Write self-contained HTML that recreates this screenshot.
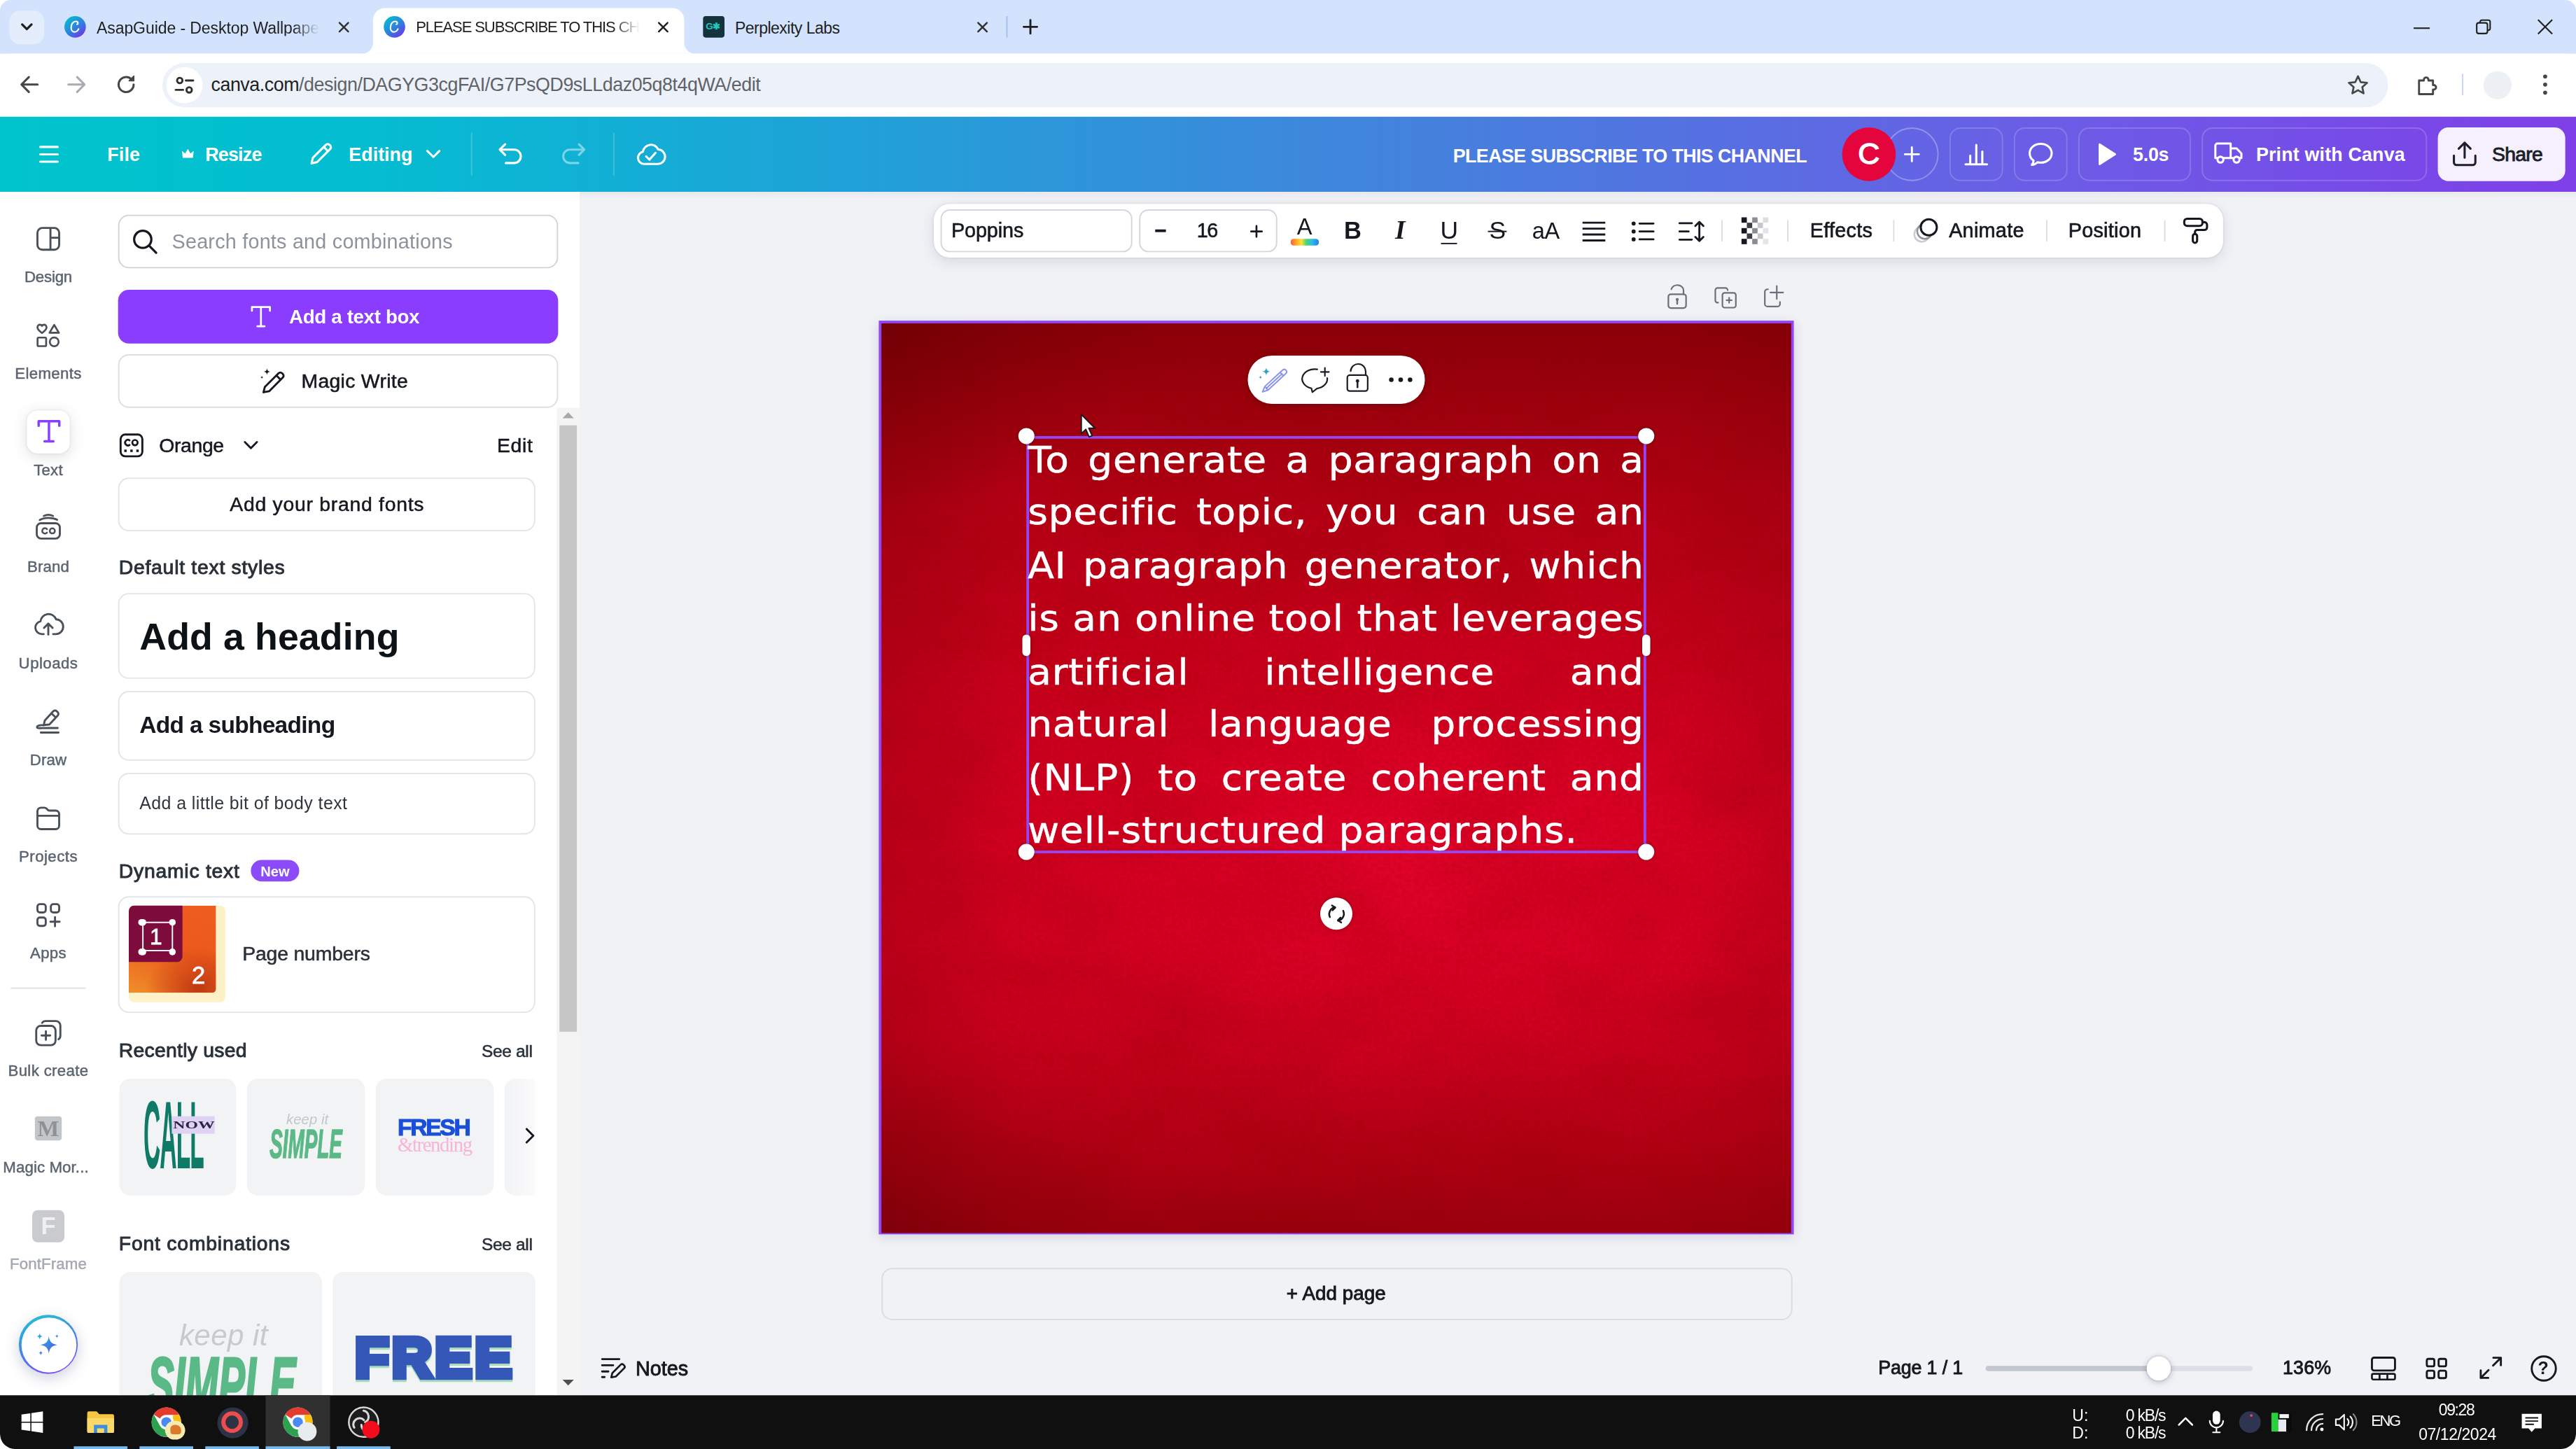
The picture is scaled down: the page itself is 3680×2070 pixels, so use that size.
<!DOCTYPE html>
<html lang="en">
<head>
<meta charset="utf-8">
<title>PLEASE SUBSCRIBE TO THIS CHANNEL - Canva</title>
<style>
*{box-sizing:border-box;margin:0;padding:0}
html,body{width:3680px;height:2070px;overflow:hidden;background:#fff}
body{font-family:"Liberation Sans",sans-serif;color:#0d1216}
#stage{position:absolute;left:0;top:0;width:1920px;height:1080px;transform:scale(1.9166667);transform-origin:0 0;overflow:hidden;background:#fff;border-radius:8px 8px 11px 11px}
.abs{position:absolute}
.t{position:absolute;white-space:nowrap;line-height:1}
svg{position:absolute;overflow:visible}
/* ---------- browser chrome ---------- */
#tabstrip{left:0;top:0;width:1920px;height:40px;background:#d3e3fd}
#toolbar{left:0;top:40px;width:1920px;height:47px;background:#fff;border-radius:8px 8px 0 0}
#omni{left:121px;top:47px;width:1659px;height:33px;border-radius:17px;background:#edf2fa}
.tabt{font-size:12px;color:#1f1f1f;top:14.7px}
/* ---------- canva header ---------- */
#hdr{left:0;top:87px;width:1920px;height:56px;background:linear-gradient(90deg,#00c4cc 0%,#04bdd1 14%,#1ba6d7 30%,#3f86dc 52%,#6c5ce6 80%,#7f3fe8 100%)}
.hb{font-weight:700;font-size:14px;color:#fff;top:108px}
.hbtn{position:absolute;top:95px;height:40px;border:1px solid rgba(255,255,255,.18);border-radius:8px}
/* ---------- sidebar ---------- */
#side{left:0;top:143px;width:72px;height:897px;background:#fff}
.sl{-webkit-text-stroke:.25px currentColor;position:absolute;left:0;width:72px;text-align:center;font-size:11.6px;color:#5b6470;line-height:1;white-space:nowrap}
/* ---------- panel ---------- */
#panel{left:72px;top:143px;width:360px;height:897px;background:#fff}
.card{position:absolute;border:1px solid #e2e5e9;border-radius:8px;background:#fff}
.pt{position:absolute;white-space:nowrap;line-height:1;color:#0d1216}
/* ---------- editor ---------- */
#editor{left:432px;top:143px;width:1488px;height:897px;background:#f1f2f6}
#txt .ln{white-space:nowrap;text-align:justify;text-align-last:justify;height:39.5px}
.hd{position:absolute;width:12.6px;height:12.6px;border-radius:50%;background:#fff;box-shadow:0 0 3px rgba(0,0,0,.35)}
.hs{position:absolute;width:5.6px;height:16px;border-radius:3px;background:#fff;box-shadow:0 0 3px rgba(0,0,0,.35)}
/* ---------- taskbar ---------- */
#task{left:0;top:1040px;width:1920px;height:40px;background:#101010;border-radius:0 0 11px 11px}
.tk{position:absolute;white-space:nowrap;line-height:1;color:#fff;font-size:12px}
</style>
</head>
<body>
<div id="stage">

<!-- ================= BROWSER CHROME ================= -->
<div id="tabstrip" class="abs"></div>
<div id="toolbar" class="abs"></div>
<!-- tab search -->
<div class="abs" style="left:7px;top:8px;width:26px;height:25px;border-radius:8px;background:#e4edfc"></div>
<svg style="left:14px;top:15px" width="12" height="10" viewBox="0 0 12 10"><path d="M2.5 3.2 L6 6.7 L9.5 3.2" fill="none" stroke="#1f1f1f" stroke-width="1.7" stroke-linecap="round" stroke-linejoin="round"/></svg>
<!-- tab 1 -->
<svg style="left:48px;top:12px" width="16" height="16" viewBox="0 0 16 16"><defs><linearGradient id="cvg" x1="0.1" y1="0" x2="0.9" y2="1"><stop offset="0" stop-color="#00c4cc"/><stop offset=".55" stop-color="#2f7fe0"/><stop offset="1" stop-color="#7d2ae8"/></linearGradient></defs><circle cx="8" cy="8" r="8" fill="url(#cvg)"/><path d="M10.6 9.6c-.6 1.3-1.7 2.2-3 2.2-1.6 0-2.6-1.4-2.6-3.3 0-2.6 1.6-4.6 3.5-4.6 1 0 1.6.6 1.6 1.3 0 .5-.3.9-.7.9" fill="none" stroke="#fff" stroke-width="1.1" stroke-linecap="round"/></svg>
<div class="t tabt" id="t_tab1" style="left:72px;width:166px;overflow:hidden;-webkit-mask-image:linear-gradient(90deg,#000 88%,transparent);letter-spacing:-0.04px">AsapGuide - Desktop Wallpaper</div>
<svg style="left:251.7px;top:15.8px" width="8.6" height="8.6" viewBox="0 0 10 10"><path d="M1.2 1.2 L8.8 8.8 M8.8 1.2 L1.2 8.8" stroke="#303030" stroke-width="1.5" stroke-linecap="round"/></svg>
<!-- active tab -->
<div class="abs" style="left:278px;top:6px;width:232px;height:34px;background:#fff;border-radius:9px 9px 0 0"></div>
<svg style="left:270px;top:32px" width="8" height="8" viewBox="0 0 8 8"><path d="M8 0 V8 H0 A8 8 0 0 0 8 0Z" fill="#fff"/></svg>
<svg style="left:510px;top:32px" width="8" height="8" viewBox="0 0 8 8"><path d="M0 0 V8 H8 A8 8 0 0 1 0 0Z" fill="#fff"/></svg>
<svg style="left:286px;top:12px" width="16" height="16" viewBox="0 0 16 16"><circle cx="8" cy="8" r="8" fill="url(#cvg)"/><path d="M10.6 9.6c-.6 1.3-1.7 2.2-3 2.2-1.6 0-2.6-1.4-2.6-3.3 0-2.6 1.6-4.6 3.5-4.6 1 0 1.6.6 1.6 1.3 0 .5-.3.9-.7.9" fill="none" stroke="#fff" stroke-width="1.1" stroke-linecap="round"/></svg>
<div class="t tabt" id="t_tab2" style="left:310px;width:167px;overflow:hidden;-webkit-mask-image:linear-gradient(90deg,#000 88%,transparent);font-size:11.5px;letter-spacing:-0.58px">PLEASE SUBSCRIBE TO THIS CHANNEL</div>
<svg style="left:489.7px;top:15.8px" width="8.6" height="8.6" viewBox="0 0 10 10"><path d="M1.2 1.2 L8.8 8.8 M8.8 1.2 L1.2 8.8" stroke="#1f1f1f" stroke-width="1.5" stroke-linecap="round"/></svg>
<!-- tab 3 -->
<div class="abs" style="left:524px;top:12px;width:16px;height:16px;background:#13343b;border-radius:2px"></div>
<div class="t" style="left:526px;top:16px;font-size:7px;font-weight:700;color:#20c5c0;letter-spacing:-.3px">G✱</div>
<div class="t tabt" id="t_tab3" style="left:547.8px;letter-spacing:-0.27px">Perplexity Labs</div>
<svg style="left:727.7px;top:15.8px" width="8.6" height="8.6" viewBox="0 0 10 10"><path d="M1.2 1.2 L8.8 8.8 M8.8 1.2 L1.2 8.8" stroke="#303030" stroke-width="1.5" stroke-linecap="round"/></svg>
<div class="abs" style="left:750px;top:12px;width:1px;height:16px;background:#a8c0e8"></div>
<svg style="left:762px;top:14px" width="12" height="12" viewBox="0 0 12 12"><path d="M6 1 V11 M1 6 H11" stroke="#1f1f1f" stroke-width="1.5" stroke-linecap="round"/></svg>
<!-- window controls -->
<svg style="left:1799px;top:20px" width="12" height="2" viewBox="0 0 12 2"><path d="M0 1 H12" stroke="#1f1f1f" stroke-width="1.1"/></svg>
<svg style="left:1845px;top:14px" width="12" height="12" viewBox="0 0 12 12"><rect x="1" y="3" width="8" height="8" rx="1.5" fill="none" stroke="#1f1f1f" stroke-width="1.1"/><path d="M3.5 3 V2.3 A1.3 1.3 0 0 1 4.8 1 H9.7 A1.3 1.3 0 0 1 11 2.3 V7.2 A1.3 1.3 0 0 1 9.7 8.5 H9" fill="none" stroke="#1f1f1f" stroke-width="1.1"/></svg>
<svg style="left:1891px;top:14px" width="12" height="12" viewBox="0 0 12 12"><path d="M.7 .7 L11.3 11.3 M11.3 .7 L.7 11.3" stroke="#1f1f1f" stroke-width="1.1"/></svg>
<!-- nav buttons -->
<svg style="left:14px;top:55px" width="16" height="16" viewBox="0 0 16 16"><path d="M14 8 H2.5 M7.5 2.5 L2 8 L7.5 13.5" fill="none" stroke="#444746" stroke-width="1.6" stroke-linecap="round" stroke-linejoin="round"/></svg>
<svg style="left:49px;top:55px" width="16" height="16" viewBox="0 0 16 16"><path d="M2 8 H13.5 M8.5 2.5 L14 8 L8.5 13.5" fill="none" stroke="#a9acb0" stroke-width="1.6" stroke-linecap="round" stroke-linejoin="round"/></svg>
<svg style="left:86px;top:55px" width="16" height="16" viewBox="0 0 16 16"><path d="M13.6 8 A5.6 5.6 0 1 1 11.9 4" fill="none" stroke="#444746" stroke-width="1.6" stroke-linecap="round"/><path d="M13.8 1.6 V5.2 H10.2Z" fill="#444746" stroke="#444746" stroke-width=".8" stroke-linejoin="round"/></svg>
<!-- omnibox -->
<div id="omni" class="abs"></div>
<div class="abs" style="left:124px;top:50px;width:27px;height:27px;border-radius:50%;background:#fff"></div>
<svg style="left:130px;top:56px" width="15" height="15" viewBox="0 0 15 15"><circle cx="4" cy="4" r="2" fill="none" stroke="#303030" stroke-width="1.5"/><path d="M8.5 4 H14" stroke="#303030" stroke-width="1.5" stroke-linecap="round"/><circle cx="11" cy="11" r="2" fill="none" stroke="#303030" stroke-width="1.5"/><path d="M1 11 H6.5" stroke="#303030" stroke-width="1.5" stroke-linecap="round"/></svg>
<div class="t" id="url" style="left:157.3px;top:56px;font-size:14px;color:#1f1f1f;letter-spacing:-0.24px">canva.com<span style="color:#5f6368">/design/DAGYG3cgFAI/G7PsQD9sLLdaz05q8t4qWA/edit</span></div>
<svg style="left:1749px;top:55px" width="17" height="17" viewBox="0 0 17 17"><path d="M8.5 1.8 L10.5 6.2 L15.3 6.7 L11.7 9.9 L12.7 14.6 L8.5 12.2 L4.3 14.6 L5.3 9.9 L1.7 6.7 L6.5 6.2Z" fill="none" stroke="#444746" stroke-width="1.4" stroke-linejoin="round"/></svg>
<svg style="left:1800px;top:54px" width="18" height="18" viewBox="0 0 18 18"><path d="M3 6 H6.6 V5.4 A1.7 1.7 0 0 1 10 5.4 V6 H13.4 V9.4 H14 A1.7 1.7 0 0 1 14 12.8 H13.4 V16.2 H3Z" fill="none" stroke="#444746" stroke-width="1.5" stroke-linejoin="round"/></svg>
<div class="abs" style="left:1835px;top:55px;width:1px;height:16px;background:#c7d5ee"></div>
<div class="abs" style="left:1851px;top:53px;width:21px;height:21px;border-radius:50%;background:#edf0f4"></div>
<svg style="left:1895px;top:54px" width="4" height="18" viewBox="0 0 4 18"><circle cx="2" cy="3" r="1.5" fill="#444746"/><circle cx="2" cy="9" r="1.5" fill="#444746"/><circle cx="2" cy="15" r="1.5" fill="#444746"/></svg>

<!-- ================= CANVA HEADER ================= -->
<div id="hdr" class="abs"></div>
<svg style="left:29px;top:108px" width="15" height="14" viewBox="0 0 15 14"><path d="M1 1.5 H14 M1 7 H14 M1 12.5 H14" stroke="#fff" stroke-width="1.6" stroke-linecap="round"/></svg>
<div class="t hb" id="h_file" style="left:80.0px;letter-spacing:0.06px">File</div>
<svg style="left:135px;top:110px" width="10" height="9" viewBox="0 0 10 9"><path d="M1.2 7.6 L.6 2.4 L3 4.4 L5 1 L7 4.4 L9.4 2.4 L8.8 7.6Z" fill="#fff"/></svg>
<div class="t hb" id="h_resize" style="left:153.0px;letter-spacing:-0.41px">Resize</div>
<svg style="left:230px;top:105px" width="19" height="19" viewBox="0 0 19 19"><path d="M2.2 16.8 L3.2 12.6 L12.9 2.9 A1.9 1.9 0 0 1 15.6 2.9 L16.1 3.4 A1.9 1.9 0 0 1 16.1 6.1 L6.4 15.8Z M11.3 4.5 L14.5 7.7" fill="none" stroke="#fff" stroke-width="1.6" stroke-linejoin="round" stroke-linecap="round"/></svg>
<div class="t hb" id="h_edit" style="left:260.0px;letter-spacing:0.01px">Editing</div>
<svg style="left:317px;top:111px" width="12" height="8" viewBox="0 0 12 8"><path d="M1.5 1.5 L6 6 L10.5 1.5" fill="none" stroke="#fff" stroke-width="1.6" stroke-linecap="round" stroke-linejoin="round"/></svg>
<div class="abs" style="left:351px;top:99px;width:1px;height:32px;background:rgba(255,255,255,.2)"></div>
<svg style="left:371px;top:106px" width="19" height="17" viewBox="0 0 19 17"><path d="M5.5 1.5 L1.5 5.5 L5.5 9.5 M1.8 5.5 H12.2 A5 5 0 0 1 12.2 15.5 H6" fill="none" stroke="#fff" stroke-width="1.6" stroke-linecap="round" stroke-linejoin="round"/></svg>
<svg style="left:418px;top:106px;opacity:.45" width="19" height="17" viewBox="0 0 19 17"><path d="M13.5 1.5 L17.5 5.5 L13.5 9.5 M17.2 5.5 H6.8 A5 5 0 0 0 6.8 15.5 H13" fill="none" stroke="#fff" stroke-width="1.6" stroke-linecap="round" stroke-linejoin="round"/></svg>
<div class="abs" style="left:457px;top:99px;width:1px;height:32px;background:rgba(255,255,255,.2)"></div>
<svg style="left:474px;top:106px" width="22" height="18" viewBox="0 0 22 18"><path d="M6 16.2 A4.6 4.6 0 0 1 5.2 7.1 A6 6 0 0 1 16.6 5.4 A5.4 5.4 0 0 1 16 16.2Z" fill="none" stroke="#fff" stroke-width="1.6" stroke-linejoin="round"/><path d="M7.6 10.6 L10.1 13 L14.6 7.9" fill="none" stroke="#fff" stroke-width="1.6" stroke-linecap="round" stroke-linejoin="round"/></svg>
<!-- right -->
<div class="t hb" id="h_title" style="left:1083.0px;top:108.5px;letter-spacing:-0.31px">PLEASE SUBSCRIBE TO THIS CHANNEL</div>
<div class="abs" style="left:1405px;top:95px;width:40px;height:40px;border-radius:50%;border:1px solid rgba(255,255,255,.3)"></div>
<svg style="left:1419px;top:109px" width="12" height="12" viewBox="0 0 12 12"><path d="M6 .8 V11.2 M.8 6 H11.2" stroke="#fff" stroke-width="1.5" stroke-linecap="round"/></svg>
<div class="abs" style="left:1373px;top:95px;width:40px;height:40px;border-radius:50%;background:#e3053c"></div>
<div class="t" style="left:1373px;width:40px;text-align:center;top:104px;font-size:22.5px;color:#fff;-webkit-text-stroke:.7px #fff">C</div>
<div class="hbtn" style="left:1453px;width:40px"></div>
<svg style="left:1464px;top:106px" width="18" height="18" viewBox="0 0 18 18"><path d="M1 16.5 H17 M4.5 16 V10 M9 16 V2 M13.5 16 V7" stroke="#fff" stroke-width="1.6" stroke-linecap="round" fill="none"/></svg>
<div class="hbtn" style="left:1501px;width:40px"></div>
<svg style="left:1511px;top:105px" width="20" height="20" viewBox="0 0 20 20"><path d="M10 2.2 C14.6 2.2 18.2 5.2 18.2 9.2 C18.2 13.2 14.6 16.2 10 16.2 C9.2 16.2 8.4 16.1 7.7 15.9 C6.6 17 5.2 17.8 3.4 17.9 C4.3 16.9 4.7 15.8 4.7 14.7 C2.9 13.4 1.8 11.4 1.8 9.2 C1.8 5.2 5.4 2.2 10 2.2Z" fill="none" stroke="#fff" stroke-width="1.6" stroke-linejoin="round"/></svg>
<div class="hbtn" style="left:1549px;width:84px"></div>
<svg style="left:1563px;top:106px" width="15" height="18" viewBox="0 0 15 18"><path d="M1.2 1.6 V16.4 A.7 .7 0 0 0 2.3 17 L13.9 9.6 A.7 .7 0 0 0 13.9 8.4 L2.3 1 A.7 .7 0 0 0 1.2 1.6Z" fill="#fff"/></svg>
<div class="t hb" id="h_time" style="left:1589.8px;letter-spacing:-0.15px">5.0s</div>
<div class="hbtn" style="left:1641px;width:168px"></div>
<svg style="left:1650px;top:105px" width="22" height="18" viewBox="0 0 22 18"><path d="M1.2 12.8 V3.6 A1.6 1.6 0 0 1 2.8 2 H12.6 V12.8 M12.6 5.6 H17 L20.6 9.4 V12.8 H19.4 M2.6 12.8 H1.2 M7.4 12.8 H14.4" fill="none" stroke="#fff" stroke-width="1.6" stroke-linejoin="round" stroke-linecap="round"/><circle cx="5" cy="14" r="2.2" fill="none" stroke="#fff" stroke-width="1.6"/><circle cx="17" cy="14" r="2.2" fill="none" stroke="#fff" stroke-width="1.6"/></svg>
<div class="t hb" id="h_print" style="left:1681.5px;letter-spacing:0.09px">Print with Canva</div>
<div class="abs" style="left:1817px;top:95px;width:95px;height:40px;border-radius:8px;background:#f6effe"></div>
<svg style="left:1827px;top:105px" width="20" height="20" viewBox="0 0 20 20"><path d="M10 12.5 V1.8 M5.6 5.8 L10 1.4 L14.4 5.8 M2 11 V16 A2 2 0 0 0 4 18 H16 A2 2 0 0 0 18 16 V11" fill="none" stroke="#1b1f26" stroke-width="1.6" stroke-linecap="round" stroke-linejoin="round"/></svg>
<div class="t hb" id="h_share" style="left:1857.4px;color:#1b1f26;font-weight:400;font-size:14.8px;-webkit-text-stroke:.45px #1b1f26;letter-spacing:-0.38px">Share</div>

<!-- ================= SIDEBAR ================= -->
<div id="side" class="abs"></div>
<!-- Design -->
<svg style="left:27px;top:169px" width="18" height="18" viewBox="0 0 18 18"><rect x=".9" y=".9" width="16.2" height="16.2" rx="3.6" fill="none" stroke="#4a5058" stroke-width="1.5"/><path d="M10.6 1 V17 M10.6 8.2 H17" stroke="#4a5058" stroke-width="1.5"/></svg>
<div class="sl" id="s_design" style="top:200.4px;letter-spacing:-0.10px">Design</div>
<!-- Elements -->
<svg style="left:27px;top:241px" width="18" height="18" viewBox="0 0 18 18"><path d="M4.3 7.2 C2.2 5.6 .9 4.4 .9 3 C.9 1.8 1.8 1 2.8 1 C3.5 1 4 1.4 4.3 1.9 C4.6 1.4 5.1 1 5.8 1 C6.8 1 7.7 1.8 7.7 3 C7.7 4.4 6.4 5.6 4.3 7.2Z" fill="none" stroke="#4a5058" stroke-width="1.4" stroke-linejoin="round"/><path d="M13.4 1.2 L16.9 7 H9.9Z" fill="none" stroke="#4a5058" stroke-width="1.4" stroke-linejoin="round"/><rect x="1" y="10.6" width="6.4" height="6.4" rx=".8" fill="none" stroke="#4a5058" stroke-width="1.4"/><circle cx="13.4" cy="13.8" r="3.3" fill="none" stroke="#4a5058" stroke-width="1.4"/></svg>
<div class="sl" id="s_elements" style="top:272.4px;letter-spacing:0.17px">Elements</div>
<!-- Text (active) -->
<div class="abs" style="left:20px;top:306px;width:32px;height:32px;border-radius:8px;background:#fff;box-shadow:0 0 0 1px rgba(64,87,109,.04),0 2px 10px rgba(53,71,90,.18)"></div>
<svg style="left:28px;top:313px" width="17" height="17" viewBox="0 0 17 17"><path d="M.8 4.4 V1 H16.2 V4.4 M8.5 1 V16 M5.2 16 H11.8" fill="none" stroke="#8b3dff" stroke-width="1.8" stroke-linejoin="round" stroke-linecap="round"/></svg>
<div class="sl" id="s_text" style="top:344.4px;letter-spacing:0.11px">Text</div>
<!-- Brand -->
<svg style="left:26px;top:382px" width="20" height="21" viewBox="0 0 20 21"><rect x="1.4" y="8" width="17.2" height="11.4" rx="3.2" fill="none" stroke="#4a5058" stroke-width="1.5"/><path d="M3.6 5.6 C6.5 3.6 13 3.4 16.6 5.4 M6.6 2.6 C8.6 1.6 11.6 1.6 13.6 2.6" fill="none" stroke="#4a5058" stroke-width="1.4" stroke-linecap="round"/><path d="M9 12.4 A2 2 0 1 0 9 15" fill="none" stroke="#4a5058" stroke-width="1.3" stroke-linecap="round"/><circle cx="13" cy="13.7" r="1.9" fill="none" stroke="#4a5058" stroke-width="1.3"/></svg>
<div class="sl" id="s_brand" style="top:416.4px;letter-spacing:0.09px">Brand</div>
<!-- Uploads -->
<svg style="left:25px;top:456px" width="22" height="18" viewBox="0 0 22 18"><path d="M7.6 16.6 H6 A4.8 4.8 0 0 1 5.2 7.1 A6 6 0 0 1 16.8 5.6 A5.5 5.5 0 0 1 16.4 16.6 H14.6" fill="none" stroke="#4a5058" stroke-width="1.5" stroke-linecap="round" stroke-linejoin="round"/><path d="M11 17 V9 M7.8 12 L11 8.8 L14.2 12" fill="none" stroke="#4a5058" stroke-width="1.5" stroke-linecap="round" stroke-linejoin="round"/></svg>
<div class="sl" id="s_uploads" style="top:488.4px;letter-spacing:0.24px">Uploads</div>
<!-- Draw -->
<svg style="left:26px;top:528px" width="20" height="20" viewBox="0 0 20 20"><path d="M6.6 12.4 L7.4 9 L13.6 2.2 A1.9 1.9 0 0 1 16.3 2.1 L16.9 2.7 A1.9 1.9 0 0 1 17 5.4 L10.8 12 Z M12.4 3.8 L15.6 6.8" fill="none" stroke="#4a5058" stroke-width="1.5" stroke-linejoin="round" stroke-linecap="round"/><path d="M6.4 12.6 C4 12.2 1.6 12.8 1.6 14 C1.6 15.2 4.4 14.6 9.8 14.6 H17 M4.4 18 H17.6" fill="none" stroke="#4a5058" stroke-width="1.5" stroke-linecap="round" stroke-linejoin="round"/></svg>
<div class="sl" id="s_draw" style="top:560.4px;letter-spacing:0.11px">Draw</div>
<!-- Projects -->
<svg style="left:27px;top:601px" width="18" height="18" viewBox="0 0 18 18"><path d="M.9 6.4 V3.6 A2.6 2.6 0 0 1 3.5 1 H6.2 C7.2 1 7.6 1.4 8.2 2.2 C8.7 2.9 9.1 3.2 10 3.2 H14.5 A2.6 2.6 0 0 1 17.1 5.8 V14.4 A2.6 2.6 0 0 1 14.5 17 H3.5 A2.6 2.6 0 0 1 .9 14.4Z M.9 7 H17.1" fill="none" stroke="#4a5058" stroke-width="1.5" stroke-linejoin="round"/></svg>
<div class="sl" id="s_projects" style="top:632.4px;letter-spacing:0.24px">Projects</div>
<!-- Apps -->
<svg style="left:27px;top:673px" width="18" height="18" viewBox="0 0 18 18"><rect x=".9" y=".9" width="6.2" height="6.2" rx="1.8" fill="none" stroke="#4a5058" stroke-width="1.5"/><rect x="10.9" y=".9" width="6.2" height="6.2" rx="1.8" fill="none" stroke="#4a5058" stroke-width="1.5"/><rect x=".9" y="10.9" width="6.2" height="6.2" rx="1.8" fill="none" stroke="#4a5058" stroke-width="1.5"/><path d="M14 10.6 V17.4 M10.6 14 H17.4" stroke="#4a5058" stroke-width="1.5" stroke-linecap="round"/></svg>
<div class="sl" id="s_apps" style="top:704.4px;letter-spacing:0.19px">Apps</div>
<div class="abs" style="left:8px;top:736px;width:56px;height:1px;background:#dfe1e6"></div>
<!-- Bulk create -->
<svg style="left:26px;top:760px" width="20" height="20" viewBox="0 0 20 20"><rect x="1" y="4.6" width="14.4" height="14.4" rx="3.4" fill="#fff" stroke="#4a5058" stroke-width="1.5"/><path d="M5.4 2.4 C6 1.5 6.8 1 8 1 H15.6 A3.4 3.4 0 0 1 19 4.4 V12 C19 13.2 18.5 14 17.6 14.6" fill="none" stroke="#4a5058" stroke-width="1.5" stroke-linecap="round"/><path d="M8.2 8.6 V15 M5 11.8 H11.4" stroke="#4a5058" stroke-width="1.5" stroke-linecap="round"/></svg>
<div class="sl" id="s_bulkcreate" style="top:792.4px;letter-spacing:0.18px">Bulk create</div>
<!-- Magic Morph -->
<div class="abs" style="left:26px;top:832px;width:20px;height:18px;background:#b9bcc0;border-radius:2px;opacity:.85"></div>
<div class="t" style="left:26px;width:20px;text-align:center;top:833px;font-size:17px;font-weight:700;font-family:'Liberation Serif',serif;color:#8e9196">M</div>
<div class="sl" id="s_magicmor" style="top:864.4px;left:-1.8px;letter-spacing:0.06px">Magic Mor...</div>
<!-- FontFrame -->
<div class="abs" style="left:24px;top:902px;width:24px;height:24px;background:#c9cbce;border-radius:4px"></div>
<div class="t" style="left:24px;width:24px;text-align:center;top:905px;font-size:18px;font-weight:700;color:#f0f0f1">F</div>
<div class="sl" id="s_fontframe" style="top:936.4px;color:#a4a9b0;letter-spacing:0.07px">FontFrame</div>
<!-- Assistant sparkle -->
<div class="abs" style="left:14px;top:980px;width:44px;height:44px;border-radius:50%;background:linear-gradient(160deg,#1fc7d4 0%,#3d8be6 45%,#8b3dff 100%);box-shadow:0 3px 10px rgba(60,70,110,.25)"></div>
<div class="abs" style="left:15.5px;top:981.5px;width:41px;height:41px;border-radius:50%;background:#fff"></div>
<svg style="left:25px;top:991px" width="22" height="22" viewBox="0 0 22 22"><defs><linearGradient id="spk" x1="0" y1="0" x2="1" y2="1"><stop offset="0" stop-color="#24b4e0"/><stop offset="1" stop-color="#5a4fe0"/></linearGradient></defs><path d="M11.4 5 C12 9 13.4 10.6 17.6 11.4 C13.4 12.2 12 13.8 11.4 17.8 C10.8 13.8 9.4 12.2 5.2 11.4 C9.4 10.6 10.8 9 11.4 5Z" fill="url(#spk)"/><path d="M4.6 2.6 C4.8 4.2 5.4 4.8 7 5 C5.4 5.2 4.8 5.8 4.6 7.4 C4.4 5.8 3.8 5.2 2.2 5 C3.8 4.8 4.4 4.2 4.6 2.6Z M17.4 3.4 C17.5 4.4 17.9 4.8 18.9 4.9 C17.9 5 17.5 5.4 17.4 6.4 C17.3 5.4 16.9 5 15.9 4.9 C16.9 4.8 17.3 4.4 17.4 3.4Z M5.4 15.6 C5.5 16.8 6 17.3 7.2 17.4 C6 17.5 5.5 18 5.4 19.2 C5.3 18 4.8 17.5 3.6 17.4 C4.8 17.3 5.3 16.8 5.4 15.6Z" fill="url(#spk)"/></svg>

<!-- ================= PANEL ================= -->
<div id="panel" class="abs"></div>
<!-- search -->
<div class="card" style="left:88px;top:160px;width:328px;height:40px;border-color:#d0d3d8"></div>
<svg style="left:98px;top:170px" width="20" height="20" viewBox="0 0 20 20"><circle cx="8.4" cy="8.4" r="6.4" fill="none" stroke="#15191f" stroke-width="1.7"/><path d="M13.2 13.2 L18.4 18.4" stroke="#15191f" stroke-width="1.7" stroke-linecap="round"/></svg>
<div class="pt" id="p_search" style="left:128.1px;top:172px;font-size:15px;color:#8d939c;letter-spacing:0.12px">Search fonts and combinations</div>
<!-- add text box -->
<div class="abs" style="left:88px;top:216px;width:328px;height:40px;border-radius:8px;background:#8b3dff"></div>
<svg style="left:187px;top:228px" width="15" height="16" viewBox="0 0 15 16"><path d="M.8 3.6 V.8 H14.2 V3.6 M7.5 .8 V15 M4.8 15.2 H10.2" fill="none" stroke="#fff" stroke-width="1.4" stroke-linejoin="round" stroke-linecap="round"/></svg>
<div class="pt" id="p_addtb" style="left:215.5px;top:229px;font-size:14.5px;font-weight:700;color:#fff;letter-spacing:-0.20px">Add a text box</div>
<!-- magic write -->
<div class="card" style="left:88px;top:264px;width:328px;height:40px;border-color:#dcdfe3"></div>
<svg style="left:193px;top:273px" width="22" height="22" viewBox="0 0 22 22"><path d="M3.4 19.4 L4.4 15.4 L14.6 5.2 A1.9 1.9 0 0 1 17.3 5.2 L17.8 5.7 A1.9 1.9 0 0 1 17.8 8.4 L7.6 18.6Z M13 6.8 L16.2 10" fill="none" stroke="#15191f" stroke-width="1.5" stroke-linejoin="round" stroke-linecap="round"/><path d="M6 1.6 C6.2 3.2 6.8 3.8 8.4 4 C6.8 4.2 6.2 4.8 6 6.4 C5.8 4.8 5.2 4.2 3.6 4 C5.2 3.8 5.8 3.2 6 1.6Z M2.2 7 C2.3 7.8 2.6 8.1 3.4 8.2 C2.6 8.3 2.3 8.6 2.2 9.4 C2.1 8.6 1.8 8.3 1 8.2 C1.8 8.1 2.1 7.8 2.2 7Z" fill="#15191f"/></svg>
<div class="pt" id="p_magic" style="left:224.6px;top:277px;font-size:14.8px;color:#15191f;-webkit-text-stroke:.28px #15191f;letter-spacing:0.16px">Magic Write</div>
<!-- scrollbar -->
<div class="abs" style="left:415px;top:304px;width:17px;height:736px;background:#f4f4f4"></div>
<div class="abs" style="left:417px;top:316.8px;width:13px;height:452px;background:#c6c6c6"></div>
<svg style="left:419px;top:307px" width="9" height="5" viewBox="0 0 9 5"><path d="M4.5 .3 L8.7 4.7 H.3Z" fill="#a8a8a8"/></svg>
<svg style="left:419px;top:1028px" width="9" height="5" viewBox="0 0 9 5"><path d="M4.5 4.7 L8.7 .3 H.3Z" fill="#505050"/></svg>
<!-- brand row -->
<svg style="left:89px;top:323px" width="18" height="18" viewBox="0 0 18 18"><rect x=".9" y=".9" width="16.2" height="16.2" rx="3.4" fill="none" stroke="#15191f" stroke-width="1.5"/><path d="M7.6 5.2 A2.1 2.1 0 1 0 7.6 8.6" fill="none" stroke="#15191f" stroke-width="1.4" stroke-linecap="round"/><circle cx="11.6" cy="6.9" r="2" fill="none" stroke="#15191f" stroke-width="1.4"/><path d="M3.6 13 H5.4 M8.1 13 H9.9 M12.6 13 H14.4" stroke="#15191f" stroke-width="1.8"/></svg>
<div class="pt" id="p_orange" style="left:118.6px;top:325px;font-size:14.8px;color:#15191f;-webkit-text-stroke:.28px #15191f;letter-spacing:-0.19px">Orange</div>
<svg style="left:181px;top:328px" width="12" height="8" viewBox="0 0 12 8"><path d="M1.5 1.5 L6 6 L10.5 1.5" fill="none" stroke="#15191f" stroke-width="1.5" stroke-linecap="round" stroke-linejoin="round"/></svg>
<div class="pt" id="p_edit" style="left:370.4px;top:325px;font-size:14.8px;color:#15191f;-webkit-text-stroke:.28px #15191f;letter-spacing:0.37px">Edit</div>
<div class="card" style="left:88px;top:356px;width:311px;height:40px"></div>
<div class="pt" id="p_brandf" style="left:171.3px;top:369px;font-size:14.8px;color:#15191f;-webkit-text-stroke:.28px #15191f;letter-spacing:0.38px">Add your brand fonts</div>
<div class="pt" id="p_dts" style="left:88.6px;top:416px;font-size:14.8px;color:#2a3038;-webkit-text-stroke:.5px #2a3038;letter-spacing:0.38px">Default text styles</div>
<!-- text style cards -->
<div class="card" style="left:88px;top:442px;width:311px;height:63.5px"></div>
<div class="pt" id="p_head" style="left:104.0px;top:461px;font-size:28px;font-weight:700;color:#0d1216;letter-spacing:0.06px">Add a heading</div>
<div class="card" style="left:88px;top:514.5px;width:311px;height:52px"></div>
<div class="pt" id="p_sub" style="left:104.0px;top:531.6px;font-size:17.5px;font-weight:700;color:#15191f;letter-spacing:-0.38px">Add a subheading</div>
<div class="card" style="left:88px;top:575.5px;width:311px;height:46.5px"></div>
<div class="pt" id="p_body" style="left:104.0px;top:591.7px;font-size:13px;color:#30363d;letter-spacing:0.21px">Add a little bit of body text</div>
<!-- dynamic text -->
<div class="pt" id="p_dyn" style="left:88.6px;top:642px;font-size:14.8px;color:#2a3038;-webkit-text-stroke:.5px #2a3038;letter-spacing:0.39px">Dynamic text</div>
<div class="abs" style="left:187px;top:641px;width:36px;height:16px;border-radius:8px;background:#8c4bfa"></div>
<div class="pt" id="p_new" style="left:187px;width:36px;text-align:center;top:643.5px;font-size:10.5px;font-weight:700;color:#fff">New</div>
<div class="card" style="left:88px;top:667.5px;width:311px;height:87px"></div>
<!-- page numbers thumb -->
<div class="abs" style="left:96px;top:675px;width:72px;height:72px;border-radius:4px;background:#fdf1c8"></div>
<div class="abs" style="left:96px;top:675px;width:65px;height:65px;border-radius:4px 0 3px 0;background:radial-gradient(ellipse 60% 45% at 80% 95%,#c23812 0%,rgba(194,56,18,0) 100%),linear-gradient(205deg,#ee5c1e 15%,#ea581c 50%,#f08e2a 100%)"></div>
<div class="abs" style="left:96px;top:675px;width:40px;height:42px;border-radius:4px 0 4px 0;background:#7d0c3c"></div>
<div class="abs" style="left:105.5px;top:687px;width:23px;height:22px;border:1.4px solid #fff"></div>
<div class="abs" style="left:103px;top:684.5px;width:5.5px;height:5.5px;border-radius:50%;background:#fff"></div>
<div class="abs" style="left:125.5px;top:684.5px;width:5.5px;height:5.5px;border-radius:50%;background:#fff"></div>
<div class="abs" style="left:103px;top:706.5px;width:5.5px;height:5.5px;border-radius:50%;background:#fff"></div>
<div class="abs" style="left:125.5px;top:706.5px;width:5.5px;height:5.5px;border-radius:50%;background:#fff"></div>
<div class="pt" style="left:111.6px;top:690px;font-size:16.5px;color:#fff;-webkit-text-stroke:.4px #fff">1</div>
<div class="pt" style="left:143px;top:717.6px;font-size:18px;color:#fff;-webkit-text-stroke:.4px #fff">2</div>
<div class="pt" id="p_pagen" style="left:180.6px;top:704px;font-size:14.8px;color:#2a3038;-webkit-text-stroke:.28px #2a3038;letter-spacing:-0.08px">Page numbers</div>
<!-- recently used -->
<div class="pt" id="p_recent" style="left:88.6px;top:776px;font-size:14.8px;color:#2a3038;-webkit-text-stroke:.5px #2a3038;letter-spacing:0.13px">Recently used</div>
<div class="pt" id="p_see1" style="left:359.0px;top:778.2px;font-size:12.8px;color:#2a3038;-webkit-text-stroke:.28px #2a3038;letter-spacing:-0.19px">See all</div>
<div class="abs" style="left:88.5px;top:803.5px;width:87px;height:87px;border-radius:8px;background:#f2f3f5"></div>
<div class="abs" style="left:184.3px;top:803.5px;width:87.5px;height:87px;border-radius:8px;background:#f2f3f5"></div>
<div class="abs" style="left:280.2px;top:803.5px;width:87.5px;height:87px;border-radius:8px;background:#f2f3f5"></div>
<div class="abs" style="left:376.2px;top:803.5px;width:23px;height:87px;border-radius:8px 0 0 8px;background:linear-gradient(90deg,#f2f3f5,#fbfbfc)"></div>
<!-- CALL NOW -->
<div class="pt" id="r_call" style="left:107.2px;top:809.6px;font-size:72px;font-weight:700;color:#0f7a66;transform:scaleX(0.243);transform-origin:0 0;letter-spacing:-2px">CALL</div>
<div class="abs" style="left:127.5px;top:832px;width:32px;height:12.5px;background:#dfd2f4"></div>
<div class="pt" id="r_now" style="left:128.5px;top:834.5px;font-size:8px;font-weight:700;font-family:'Liberation Serif',serif;color:#2a2540;transform:scaleX(1.55);transform-origin:0 0">NOW</div>
<!-- keep it simple small -->
<div class="pt" id="r_keep" style="left:213.4px;top:828.5px;font-size:10.5px;font-style:italic;color:#c3c6ca;letter-spacing:0.08px">keep it</div>
<div class="pt" id="r_simple" style="left:200.9px;top:837.7px;font-size:29.7px;font-weight:700;font-style:italic;color:#5ab987;-webkit-text-stroke:.8px #5ab987;transform:scaleX(0.489);transform-origin:0 0">SIMPLE</div>
<!-- fresh & trending -->
<div class="pt" id="r_fresh" style="left:296.3px;top:831.5px;font-size:17.5px;font-weight:700;color:#1a50d8;-webkit-text-stroke:.6px #1a50d8;letter-spacing:-1.15px">FRESH</div>
<div class="pt" id="r_trend" style="left:296.3px;top:846px;font-size:15px;font-family:'Liberation Serif',serif;color:#f7b4d8;letter-spacing:-0.72px">&amp;trending</div>
<svg style="left:391px;top:840px" width="8" height="13" viewBox="0 0 8 13"><path d="M1.5 1.5 L6.5 6.5 L1.5 11.5" fill="none" stroke="#15191f" stroke-width="1.5" stroke-linecap="round" stroke-linejoin="round"/></svg>
<!-- font combinations -->
<div class="pt" id="p_combo" style="left:88.6px;top:920px;font-size:14.8px;color:#2a3038;-webkit-text-stroke:.5px #2a3038;letter-spacing:0.41px">Font combinations</div>
<div class="pt" id="p_see2" style="left:359.0px;top:922.2px;font-size:12.8px;color:#2a3038;-webkit-text-stroke:.28px #2a3038;letter-spacing:-0.19px">See all</div>
<div class="abs" style="left:88.5px;top:947.5px;width:151px;height:93px;border-radius:8px 8px 0 0;background:#f2f3f5;overflow:hidden">
  <div class="pt" id="c_keep" style="left:45px;top:37px;font-size:22px;font-style:italic;color:#c6c9ce;letter-spacing:0.20px">keep it</div>
  <div class="pt" id="c_simple" style="left:21px;top:56px;font-size:56px;font-weight:700;font-style:italic;color:#5ab987;-webkit-text-stroke:1.6px #5ab987;transform:scaleX(.53);transform-origin:0 0">SIMPLE</div>
</div>
<div class="abs" style="left:248px;top:947.5px;width:151px;height:93px;border-radius:8px 8px 0 0;background:#f2f3f5;overflow:hidden">
  <div class="pt" id="c_free2" style="left:16.5px;top:46.7px;font-size:41.4px;font-weight:700;color:#a6dcbc;-webkit-text-stroke:4.4px #a6dcbc;letter-spacing:2.20px">FREE</div>
  <div class="pt" id="c_free" style="left:16.5px;top:44.5px;font-size:41.4px;font-weight:700;color:#3558b8;-webkit-text-stroke:4.4px #3558b8;letter-spacing:2.20px">FREE</div>
</div>

<!-- ================= EDITOR ================= -->
<div id="editor" class="abs"></div>
<div class="abs" style="left:432px;top:143px;width:1488px;height:5px;background:linear-gradient(180deg,rgba(40,50,80,.05),rgba(40,50,80,0))"></div>
<!-- toolbar -->
<div class="abs" style="left:696px;top:152px;width:961px;height:39.5px;border-radius:12px;background:#fff;box-shadow:0 0 0 1px rgba(64,87,109,.05),0 3px 10px rgba(40,50,80,.13)"></div>
<div class="abs" style="left:700.5px;top:156px;width:143px;height:31.5px;border:1px solid #d3d6db;border-radius:7px"></div>
<div class="pt" id="e_poppins" style="left:709.0px;top:164.4px;font-size:15px;color:#15191f;-webkit-text-stroke:.3px #15191f;letter-spacing:-0.04px">Poppins</div>
<div class="abs" style="left:848.5px;top:156px;width:103px;height:31.5px;border:1px solid #d3d6db;border-radius:7px"></div>
<div class="abs" style="left:860.5px;top:171.3px;width:8.5px;height:1.3px;background:#15191f"></div>
<div class="pt" id="e_16" style="left:892.0px;top:164.4px;font-size:15px;color:#15191f;-webkit-text-stroke:.3px #15191f;letter-spacing:-0.69px">16</div>
<svg style="left:931.5px;top:167.5px" width="9" height="9" viewBox="0 0 9 9"><path d="M4.5 .5 V8.5 M.5 4.5 H8.5" stroke="#15191f" stroke-width="1.4" stroke-linecap="round"/></svg>
<!-- A colour -->
<div class="pt" style="left:966.6px;top:161.2px;font-size:17px;color:#15191f">A</div>
<div class="abs" style="left:962.3px;top:178.4px;width:20.6px;height:4.4px;border-radius:2.2px;background:linear-gradient(90deg,#ff5a3c,#ffb020 22%,#ffe03a 38%,#52d66a 55%,#26c0e8 75%,#2a7bf0 100%)"></div>
<div class="pt" style="left:1001.7px;top:163px;font-size:18px;font-weight:700;color:#15191f">B</div>
<div class="pt" style="left:1039.8px;top:161.6px;font-size:19.5px;font-style:italic;font-family:'Liberation Serif',serif;font-weight:700;color:#15191f">I</div>
<div class="pt" style="left:1073.5px;top:163px;font-size:18.5px;color:#15191f">U</div>
<div class="abs" style="left:1073.8px;top:180.6px;width:12.4px;height:1.4px;background:#15191f"></div>
<div class="pt" style="left:1110px;top:163px;font-size:18.5px;color:#15191f">S</div>
<div class="abs" style="left:1108.5px;top:172px;width:14.6px;height:1.4px;background:#15191f"></div>
<div class="pt" style="left:1142px;top:163.5px;font-size:17px;color:#15191f;letter-spacing:-.3px">aA</div>
<!-- align / list / spacing -->
<svg style="left:1179px;top:164.5px" width="18" height="15" viewBox="0 0 18 15"><path d="M.5 1 H17.5 M.5 5.4 H17.5 M.5 9.8 H17.5 M.5 14.2 H17.5" stroke="#15191f" stroke-width="1.5"/></svg>
<svg style="left:1216px;top:164.5px" width="17" height="15" viewBox="0 0 17 15"><circle cx="1.6" cy="1.6" r="1.5" fill="#15191f"/><circle cx="1.6" cy="7.5" r="1.5" fill="#15191f"/><circle cx="1.6" cy="13.4" r="1.5" fill="#15191f"/><path d="M6 1.6 H16.4 M6 7.5 H16.4 M6 13.4 H16.4" stroke="#15191f" stroke-width="1.5" stroke-linecap="round"/></svg>
<svg style="left:1250.5px;top:163.5px" width="20" height="17" viewBox="0 0 20 17"><path d="M.8 2.4 H10 M.8 8.5 H7.6 M.8 14.6 H10" stroke="#15191f" stroke-width="1.5" stroke-linecap="round"/><path d="M15.6 1.6 V15.4 M12.6 4.4 L15.6 1.4 L18.6 4.4 M12.6 12.6 L15.6 15.6 L18.6 12.6" fill="none" stroke="#15191f" stroke-width="1.5" stroke-linecap="round" stroke-linejoin="round"/></svg>
<div class="abs" style="left:1283.3px;top:164px;width:1px;height:16px;background:#dcdee2"></div>
<!-- transparency checker -->
<svg style="left:1298px;top:162px" width="20" height="20" viewBox="0 0 20 20"><g><rect x="0" y="0" width="4" height="4" fill="#15191f"/><rect x="8" y="0" width="4" height="4" fill="#8a8d92"/><rect x="16" y="0" width="4" height="4" fill="#dcdde0"/><rect x="4" y="4" width="4" height="4" fill="#3a3e44"/><rect x="12" y="4" width="4" height="4" fill="#c4c6ca"/><rect x="0" y="8" width="4" height="4" fill="#15191f"/><rect x="8" y="8" width="4" height="4" fill="#8a8d92"/><rect x="16" y="8" width="4" height="4" fill="#e4e5e8"/><rect x="4" y="12" width="4" height="4" fill="#3a3e44"/><rect x="12" y="12" width="4" height="4" fill="#c4c6ca"/><rect x="0" y="16" width="4" height="4" fill="#15191f"/><rect x="8" y="16" width="4" height="4" fill="#8a8d92"/><rect x="16" y="16" width="4" height="4" fill="#e4e5e8"/></g></svg>
<div class="abs" style="left:1331.6px;top:164px;width:1px;height:16px;background:#dcdee2"></div>
<div class="pt" id="e_effects" style="left:1349.1px;top:164.4px;font-size:15px;color:#15191f;-webkit-text-stroke:.35px #15191f;letter-spacing:0.15px">Effects</div>
<div class="abs" style="left:1411.3px;top:164px;width:1px;height:16px;background:#dcdee2"></div>
<svg style="left:1425px;top:160.5px" width="22" height="22" viewBox="0 0 22 22"><circle cx="7.4" cy="13.6" r="5.6" fill="none" stroke="#c8cacd" stroke-width="1.3"/><circle cx="9.6" cy="11.4" r="5.6" fill="#fff" stroke="#8e9196" stroke-width="1.3"/><circle cx="12.6" cy="8.4" r="6" fill="#fff" stroke="#15191f" stroke-width="1.6"/></svg>
<div class="pt" id="e_animate" style="left:1452.6px;top:164.4px;font-size:15px;color:#15191f;-webkit-text-stroke:.35px #15191f;letter-spacing:0.16px">Animate</div>
<div class="abs" style="left:1524.6px;top:164px;width:1px;height:16px;background:#dcdee2"></div>
<div class="pt" id="e_position" style="left:1541.6px;top:164.4px;font-size:15px;color:#15191f;-webkit-text-stroke:.35px #15191f;letter-spacing:0.15px">Position</div>
<div class="abs" style="left:1612.6px;top:164px;width:1px;height:16px;background:#dcdee2"></div>
<svg style="left:1627px;top:162px" width="19" height="20" viewBox="0 0 19 20"><rect x="1" y="1" width="13.6" height="5.4" rx="2.2" fill="none" stroke="#15191f" stroke-width="1.6"/><path d="M14.8 3.6 H16 A2 2 0 0 1 18 5.6 V7.4 A2 2 0 0 1 16 9.4 H10.6 A1.6 1.6 0 0 0 9 11 V12.4" fill="none" stroke="#15191f" stroke-width="1.6" stroke-linecap="round"/><rect x="7.4" y="12.4" width="3.2" height="6.6" rx="1.6" fill="none" stroke="#15191f" stroke-width="1.6"/></svg>
<!-- page action icons -->
<svg style="left:1240px;top:208px" width="92" height="26" viewBox="1240 208 92 26"><g fill="none" stroke="#6a7079" stroke-width="1.15" stroke-linecap="round" stroke-linejoin="round">
<rect x="1243.5" y="219.3" width="13.2" height="10.3" rx="1.8"/><path d="M1245.7 215.6 A4.6 3.9 0 0 1 1254.8 216.6 V219.3"/><path d="M1250.1 223.6 V226.4" stroke-width="1.3"/><circle cx="1250.1" cy="223.2" r="1.1" fill="#6a7079" stroke="none"/>
<rect x="1283.8" y="218.3" width="10" height="11" rx="1.6"/><path d="M1280.6 225.6 H1280.2 A1.7 1.7 0 0 1 1278.5 223.9 V216.3 A1.7 1.7 0 0 1 1280.2 214.6 H1286 A1.7 1.7 0 0 1 1287.7 216.3"/><path d="M1288.8 221.9 V225.7 M1286.9 223.8 H1290.7"/>
<path d="M1317.8 215.6 H1317.4 A2 2 0 0 0 1315.4 217.6 V226.5 A2 2 0 0 0 1317.4 228.5 H1324.7 A2 2 0 0 0 1326.7 226.5 V225.1"/><path d="M1324.3 213.2 V222.8 M1319.5 218 H1329.1"/>
</g></svg>
<!-- canvas -->
<div class="abs" style="left:655px;top:239.2px;width:682.1px;height:681.1px;background:#8f45f8;box-shadow:0 2px 8px rgba(40,50,80,.15)"></div>
<div class="abs" id="cv" style="left:656.8px;top:241px;width:678.5px;height:677.5px;overflow:hidden;background:radial-gradient(ellipse 42% 30% at 60% 58%,rgba(242,6,52,.5),rgba(242,6,52,0) 100%),radial-gradient(ellipse 30% 22% at 0% 100%,rgba(60,0,0,.2),rgba(60,0,0,0) 100%),radial-gradient(ellipse 30% 20% at 0% 0%,rgba(60,0,0,.25),rgba(60,0,0,0) 100%),linear-gradient(90deg,rgba(70,0,0,.15) 0%,rgba(70,0,0,0) 14%,rgba(70,0,0,0) 88%,rgba(70,0,0,.09) 100%),linear-gradient(180deg,#8a0009 0%,#9e000e 9%,#b30015 20%,#c5001b 36%,#d00020 54%,#cf0020 68%,#c3001b 82%,#ad0013 93%,#9a000e 100%)">
  <svg style="left:0;top:0" width="679" height="678" viewBox="0 0 679 678"><defs><filter id="nz" x="0" y="0" width="100%" height="100%"><feTurbulence type="fractalNoise" baseFrequency=".012 .02" numOctaves="4" seed="7"/><feColorMatrix type="matrix" values="0 0 0 0 0.25  0 0 0 0 0  0 0 0 0 0  1.6 0 0 0 -0.62"/></filter><filter id="nz2" x="0" y="0" width="100%" height="100%"><feTurbulence type="fractalNoise" baseFrequency=".35" numOctaves="2" seed="3"/><feColorMatrix type="matrix" values="0 0 0 0 0.3  0 0 0 0 0  0 0 0 0 0  0 1.5 0 0 -0.6"/></filter></defs><rect width="679" height="678" filter="url(#nz)" opacity=".22"/><rect width="679" height="678" filter="url(#nz2)" opacity=".3"/></svg>
</div>
<!-- floating pill -->
<div class="abs" style="left:930px;top:265px;width:132px;height:36px;border-radius:18px;background:#fff;box-shadow:0 1px 6px rgba(0,0,0,.25)"></div>
<svg style="left:930px;top:265px" width="132" height="36" viewBox="0 0 132 36"><g fill="none" stroke-linecap="round" stroke-linejoin="round">
<path d="M11 27.1 L15.15 25.7 L28.6 13.2 A1.8 1.8 0 0 0 26.2 10.6 L12.71 23.06Z M12.71 23.06 L15.15 25.7 M24.13 12.46 L26.57 15.1 M13.7 24.6 L25.6 13.6" stroke="#8b95ea" stroke-width="1.05"/>
<path d="M13.8 8.9 C14.1 10.9 14.8 11.6 16.8 11.9 C14.8 12.2 14.1 12.9 13.8 14.9 C13.5 12.9 12.8 12.2 10.8 11.9 C12.8 11.6 13.5 10.9 13.8 8.9Z M9.5 14.8 C9.65 15.8 9.9 16.05 10.9 16.2 C9.9 16.35 9.65 16.6 9.5 17.6 C9.35 16.6 9.1 16.35 8.1 16.2 C9.1 16.05 9.35 15.8 9.5 14.8Z" fill="#2aa3c6" stroke="none"/>
<path d="M59.26 16.76 A9.4 7.3 0 0 1 51.53 24.59 L48.2 27.3 L47.47 24.45 A9.4 7.3 0 0 1 51.85 10.26 M57.5 9.2 V15.2 M54.5 12.2 H60.5" stroke="#1a1e24" stroke-width="1.15"/>
<rect x="74.2" y="14.6" width="15.2" height="11.9" rx="1.8" stroke="#1a1e24" stroke-width="1.15"/>
<path d="M76.7 11.6 A5.6 5.6 0 0 1 87.9 12.2 V14.6" stroke="#1a1e24" stroke-width="1.15"/>
<path d="M81.8 19.4 V23.6" stroke="#1a1e24" stroke-width="1.3"/><circle cx="81.8" cy="18.9" r="1.25" fill="#1a1e24" stroke="none"/>
</g></svg>
<svg style="left:1035px;top:281.2px" width="18" height="4" viewBox="0 0 18 4"><circle cx="2" cy="2" r="1.7" fill="#15191f"/><circle cx="9" cy="2" r="1.7" fill="#15191f"/><circle cx="16" cy="2" r="1.7" fill="#15191f"/></svg>
<!-- text box -->
<div class="abs" id="tb" style="left:764.6px;top:324.6px;width:462.8px;height:311.3px;border:2.2px solid #9547f5"></div>
<div class="abs" id="txt" style="left:766.3px;top:322.9px;width:435.1px;transform:scaleX(1.056);transform-origin:0 0;color:#fff;font-family:'DejaVu Sans','Liberation Sans',sans-serif;font-size:27.2px;line-height:39.5px;letter-spacing:.4px;-webkit-text-stroke:.25px #fff">
<div class="ln">To generate a paragraph on a</div>
<div class="ln">specific topic, you can use an</div>
<div class="ln">AI paragraph generator, which</div>
<div class="ln">is an online tool that leverages</div>
<div class="ln">artificial intelligence and</div>
<div class="ln">natural language processing</div>
<div class="ln">(NLP) to create coherent and</div>
<div class="ln" style="text-align-last:left" id="lastln"><span id="lastsp">well-structured paragraphs.</span></div>
</div>
<!-- handles -->
<div class="hd" style="left:758.7px;top:318.7px"></div>
<div class="hd" style="left:1220.5px;top:318.7px"></div>
<div class="hd" style="left:758.7px;top:628.9px"></div>
<div class="hd" style="left:1220.5px;top:628.9px"></div>
<div class="hs" style="left:762.2px;top:472.5px"></div>
<div class="hs" style="left:1224px;top:472.5px"></div>
<!-- rotate handle -->
<div class="abs" style="left:983.8px;top:669.4px;width:24px;height:24px;border-radius:50%;background:#fff;box-shadow:0 0 4px rgba(0,0,0,.3)"></div>
<svg style="left:988.6px;top:674.2px" width="14.4" height="14.4" viewBox="0 0 13 13"><path d="M2 8.6 A4.7 4.7 0 0 1 5.4 2 M11 4.4 A4.7 4.7 0 0 1 7.6 11" fill="none" stroke="#15191f" stroke-width="1.2" stroke-linecap="round"/><path d="M3.4 .8 L5.6 2.2 L3.8 4 M9.6 12.2 L7.4 10.8 L9.2 9" fill="none" stroke="#15191f" stroke-width="1.2" stroke-linecap="round" stroke-linejoin="round"/></svg>
<!-- mouse cursor -->
<svg style="left:805.4px;top:308.4px" width="12.2" height="18.8" viewBox="0 0 13 20"><path d="M1 1 V16.2 L4.6 12.8 L7.2 18.8 L9.6 17.8 L7 11.9 H11.9Z" fill="#fff" stroke="#1a1a1a" stroke-width="1.1" stroke-linejoin="round"/></svg>
<!-- add page -->
<div class="abs" style="left:656.5px;top:944.5px;width:679.5px;height:39px;border:1px solid #d9dce1;border-radius:8px"></div>
<div class="pt" id="e_addpage" style="left:958.9px;top:957px;font-size:14.5px;color:#15191f;-webkit-text-stroke:.48px #15191f;letter-spacing:0.03px">+ Add page</div>
<!-- bottom bar -->
<svg style="left:448px;top:1010.5px" width="19" height="17" viewBox="0 0 19 17"><path d="M.8 2 H13.6 M.8 6.6 H9 M.8 11.2 H5.4 M.8 15.4 H2.6" stroke="#15191f" stroke-width="1.5" stroke-linecap="round"/><path d="M7.6 15.6 L8.4 12.4 L14.6 6.2 A1.5 1.5 0 0 1 16.7 6.2 L17.2 6.7 A1.5 1.5 0 0 1 17.2 8.8 L11 15Z" fill="none" stroke="#15191f" stroke-width="1.4" stroke-linejoin="round"/></svg>
<div class="pt" id="e_notes" style="left:473.7px;top:1012.4px;font-size:15px;color:#15191f;-webkit-text-stroke:.48px #15191f;letter-spacing:0.03px">Notes</div>
<div class="pt" id="e_page" style="left:1400.0px;top:1012.4px;font-size:14px;color:#15191f;-webkit-text-stroke:.48px #15191f;letter-spacing:-0.09px">Page 1 / 1</div>
<div class="abs" style="left:1479.5px;top:1018px;width:199px;height:3.6px;border-radius:2px;background:linear-gradient(90deg,#c3c7cf 0,#c3c7cf 64.5%,#dcdfe5 64.5%)"></div>
<div class="abs" style="left:1599.7px;top:1010.8px;width:18px;height:18px;border-radius:50%;background:#fff;box-shadow:0 0 0 1px rgba(64,87,109,.08),0 1px 5px rgba(40,50,80,.3)"></div>
<div class="pt" id="e_zoom" style="left:1701.4px;top:1012.4px;font-size:14px;color:#15191f;-webkit-text-stroke:.48px #15191f;letter-spacing:0.10px">136%</div>
<svg style="left:1766.5px;top:1010.7px" width="19" height="18" viewBox="0 0 19 18"><rect x=".9" y=".9" width="17.2" height="9.6" rx="1.6" fill="none" stroke="#15191f" stroke-width="1.5"/><rect x=".9" y="13" width="17.2" height="4.2" rx="1" fill="none" stroke="#15191f" stroke-width="1.4"/><path d="M6.6 13 V17.2 M12.4 13 V17.2" stroke="#15191f" stroke-width="1.4"/></svg>
<svg style="left:1808px;top:1011.7px" width="16" height="16" viewBox="0 0 16 16"><rect x=".8" y=".8" width="5.6" height="5.6" rx="1.3" fill="none" stroke="#15191f" stroke-width="1.5"/><rect x="9.6" y=".8" width="5.6" height="5.6" rx="1.3" fill="none" stroke="#15191f" stroke-width="1.5"/><rect x=".8" y="9.6" width="5.6" height="5.6" rx="1.3" fill="none" stroke="#15191f" stroke-width="1.5"/><rect x="9.6" y="9.6" width="5.6" height="5.6" rx="1.3" fill="none" stroke="#15191f" stroke-width="1.5"/></svg>
<svg style="left:1847.5px;top:1011.2px" width="17" height="17" viewBox="0 0 17 17"><path d="M10.4 1 H16 V6.6 M16 1 L10.2 6.8 M6.6 16 H1 V10.4 M1 16 L6.8 10.2" fill="none" stroke="#15191f" stroke-width="1.5" stroke-linecap="round" stroke-linejoin="round"/></svg>
<svg style="left:1885.5px;top:1009.7px" width="20" height="20" viewBox="0 0 20 20"><circle cx="10" cy="10" r="9" fill="none" stroke="#15191f" stroke-width="1.5"/></svg>
<div class="pt" style="left:1885.5px;width:20px;text-align:center;top:1013.2px;font-size:13px;font-weight:700;color:#15191f">?</div>

<!-- ================= TASKBAR ================= -->
<div id="task" class="abs"></div>
<!-- start -->
<svg style="left:16px;top:1052px" width="16" height="16" viewBox="0 0 16 16"><path d="M0 2.3 L6.6 1.4 V7.6 H0Z M7.4 1.3 L16 0 V7.6 H7.4Z M0 8.4 H6.6 V14.6 L0 13.7Z M7.4 8.4 H16 V16 L7.4 14.7Z" fill="#fff"/></svg>
<!-- explorer -->
<svg style="left:64px;top:1051px" width="22" height="18" viewBox="0 0 22 18"><path d="M1 2.2 A1.2 1.2 0 0 1 2.2 1 H8 L10 3 H19.8 A1.2 1.2 0 0 1 21 4.2 V16 H1Z" fill="#f6c544"/><path d="M1 6 H21 V16.2 A.8 .8 0 0 1 20.2 17 H1.8 A.8 .8 0 0 1 1 16.2Z" fill="#fbd968"/><rect x="6" y="11" width="10" height="6" fill="#3b8edb"/><rect x="8.4" y="13.6" width="5.2" height="3.4" fill="#fbd968"/></svg>
<div class="abs" style="left:55px;top:1078px;width:40px;height:2px;background:#76b9ed"></div>
<!-- chrome 1 -->
<svg style="left:112px;top:1048px" width="24" height="24" viewBox="0 0 24 24"><circle cx="12" cy="12" r="11" fill="#fff"/><path d="M12 1 A11 11 0 0 1 21.5 6.5 H12 A5.5 5.5 0 0 0 7.2 9.3 L2.6 6.3 A11 11 0 0 1 12 1Z" fill="#e33b2e"/><path d="M21.5 6.5 A11 11 0 0 1 12.6 23 L16.8 14.8 A5.5 5.5 0 0 0 16.8 9.2 L17 6.5Z" fill="#fbbf12"/><path d="M2.6 6.3 L7.2 14.7 A5.5 5.5 0 0 0 13.6 17.3 L12.6 23 A11 11 0 0 1 2.6 6.3Z" fill="#2ca14e"/><circle cx="12" cy="12" r="4.4" fill="#4a8af4" stroke="#fff" stroke-width="1.2"/></svg>
<div class="abs" style="left:123.4px;top:1058.6px;width:14.5px;height:14.5px;border-radius:50%;background:#f7ecb0"></div>
<div class="abs" style="left:126.6px;top:1062.4px;width:8.5px;height:7px;border-radius:3px 4px 2px 2px;background:#dc7a2c"></div>
<div class="abs" style="left:104px;top:1078px;width:40px;height:2px;background:#76b9ed"></div>
<!-- record -->
<div class="abs" style="left:161.5px;top:1048.5px;width:23px;height:23px;border-radius:50%;background:#2d3345"></div>
<div class="abs" style="left:165px;top:1052px;width:16px;height:16px;border-radius:50%;border:3.4px solid #ee4d4d"></div>
<div class="abs" style="left:153px;top:1078px;width:40px;height:2px;background:#76b9ed"></div>
<!-- chrome 2 active -->
<div class="abs" style="left:198px;top:1040px;width:47.5px;height:40px;background:#303030"></div>
<svg style="left:210px;top:1048px" width="24" height="24" viewBox="0 0 24 24"><circle cx="12" cy="12" r="11" fill="#fff"/><path d="M12 1 A11 11 0 0 1 21.5 6.5 H12 A5.5 5.5 0 0 0 7.2 9.3 L2.6 6.3 A11 11 0 0 1 12 1Z" fill="#e33b2e"/><path d="M21.5 6.5 A11 11 0 0 1 12.6 23 L16.8 14.8 A5.5 5.5 0 0 0 16.8 9.2 L17 6.5Z" fill="#fbbf12"/><path d="M2.6 6.3 L7.2 14.7 A5.5 5.5 0 0 0 13.6 17.3 L12.6 23 A11 11 0 0 1 2.6 6.3Z" fill="#2ca14e"/><circle cx="12" cy="12" r="4.4" fill="#4a8af4" stroke="#fff" stroke-width="1.2"/></svg>
<div class="abs" style="left:222px;top:1060px;width:14px;height:14px;border-radius:50%;background:#e9ecef"></div>
<div class="abs" style="left:198px;top:1078px;width:47.5px;height:2px;background:#76b9ed"></div>
<!-- obs -->
<svg style="left:259px;top:1048px" width="24" height="24" viewBox="0 0 24 24"><circle cx="12" cy="12" r="11" fill="#1d1d1f" stroke="#d8d8d8" stroke-width="1.3"/><path d="M12 3.4 A4.6 4.6 0 0 1 13.2 12 M5 16 A4.6 4.6 0 0 1 12.2 10.4 M18.6 17 A4.6 4.6 0 0 1 10.4 14" fill="none" stroke="#d8d8d8" stroke-width="1.6" stroke-linecap="round"/></svg>
<div class="abs" style="left:270px;top:1059px;width:13px;height:13px;border-radius:50%;background:#f20c1c"></div>
<div class="abs" style="left:251px;top:1078px;width:40px;height:2px;background:#76b9ed"></div>
<!-- tray -->
<div class="tk" id="k_u" style="left:1544.5px;top:1048.5px">U:</div>
<div class="tk" id="k_d" style="left:1544.5px;top:1061.5px">D:</div>
<div class="tk" id="k_u2" style="left:1584.4px;top:1048.5px;letter-spacing:-0.63px">0 kB/s</div>
<div class="tk" id="k_d2" style="left:1584.4px;top:1061.5px;letter-spacing:-0.63px">0 kB/s</div>
<svg style="left:1623px;top:1056px" width="12" height="7" viewBox="0 0 12 7"><path d="M1 6 L6 1 L11 6" fill="none" stroke="#fff" stroke-width="1.3" stroke-linecap="round" stroke-linejoin="round"/></svg>
<svg style="left:1646px;top:1051px" width="12" height="18" viewBox="0 0 12 18"><rect x="3.2" y=".6" width="5.6" height="10" rx="2.8" fill="#fff"/><path d="M1 8 A5 5 0 0 0 11 8 M6 13 V16.4 M3.4 16.6 H8.6" fill="none" stroke="#fff" stroke-width="1.1" stroke-linecap="round"/></svg>
<div class="abs" style="left:1669px;top:1052px;width:16px;height:16px;border-radius:50%;background:#2f3550"></div>
<div class="abs" style="left:1676.6px;top:1053.5px;width:2.2px;height:2.2px;border-radius:50%;background:#e8456a"></div>
<div class="abs" style="left:1693px;top:1052.5px;width:15px;height:14px;background:#0a0a0a"></div>
<div class="abs" style="left:1693px;top:1052.5px;width:5px;height:14px;background:#27d23c"></div>
<div class="abs" style="left:1698px;top:1058px;width:6px;height:8.5px;background:#e8e8f0"></div>
<div class="abs" style="left:1699px;top:1053.5px;width:7px;height:3px;background:#f4f4f4"></div>
<svg style="left:1718px;top:1053px" width="15" height="14" viewBox="0 0 15 14"><path d="M1.2 13 A12 12 0 0 1 13.2 1 M4.8 13 A8.4 8.4 0 0 1 13.2 4.6 M8.4 13 A4.8 4.8 0 0 1 13.2 8.2" fill="none" stroke="#e6e6e6" stroke-width="1.2" stroke-linecap="round"/><circle cx="12.6" cy="12.4" r="1.3" fill="#fff"/></svg>
<svg style="left:1740px;top:1053px" width="18" height="14" viewBox="0 0 18 14"><path d="M1 4.8 H3.6 L7.2 1.4 V12.6 L3.6 9.2 H1Z" fill="none" stroke="#fff" stroke-width="1.1" stroke-linejoin="round"/><path d="M9.6 4.6 A3.4 3.4 0 0 1 9.6 9.4 M11.8 2.8 A6 6 0 0 1 11.8 11.2" fill="none" stroke="#fff" stroke-width="1.1" stroke-linecap="round"/><path d="M14 1 A8.6 8.6 0 0 1 14 13" fill="none" stroke="#8a8a8a" stroke-width="1.1" stroke-linecap="round"/></svg>
<div class="tk" id="k_eng" style="left:1767.3px;top:1054px;font-size:11.5px;letter-spacing:-1.31px">ENG</div>
<div class="tk" id="k_time" style="left:1817.6px;top:1045px;letter-spacing:-0.71px">09:28</div>
<div class="tk" id="k_date" style="left:1802.7px;top:1062.5px;letter-spacing:-0.23px">07/12/2024</div>
<svg style="left:1879px;top:1052.5px" width="16" height="16" viewBox="0 0 16 16"><path d="M.6 .8 H15.4 V11.6 H10.4 L8 14.4 L5.6 11.6 H.6Z" fill="#fff"/><path d="M3.2 3.8 H12.8 M3.2 6.2 H12.8 M3.2 8.6 H9.6" stroke="#101010" stroke-width="1"/></svg>

</div>
</body>
</html>
